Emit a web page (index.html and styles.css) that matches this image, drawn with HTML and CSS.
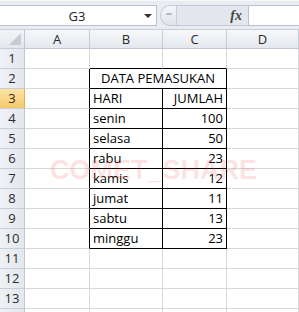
FILE: index.html
```html
<!DOCTYPE html>
<html lang="en">
<head>
    <meta charset="UTF-8">
    <title>DATA PEMASUKAN</title>
    <link rel="stylesheet" href="styles.css">
</head>
<body>
    <div class="formula-bar">
        <div class="name-box">
            <span class="name">G3</span>
            <span class="arrow"></span>
        </div>
        <div class="fx-area">
            <span class="grip"></span>
            <span class="fx">fx</span>
        </div>
        <div class="formula-input"></div>
    </div>

    <div class="sheet">
        <div class="row head-row">
            <div class="rh corner"><span class="tri"></span></div>
            <div class="ch col-a">A</div>
            <div class="ch col-b">B</div>
            <div class="ch col-c">C</div>
            <div class="ch col-d">D</div>
        </div>
        <div class="row">
            <div class="rh">1</div>
            <div class="cell col-a"></div>
            <div class="cell col-b bb"></div>
            <div class="cell col-c bb"></div>
            <div class="cell col-d"></div>
        </div>
        <div class="row">
            <div class="rh">2</div>
            <div class="cell col-a br"></div>
            <div class="cell merged br bb center">DATA PEMASUKAN</div>
            <div class="cell col-d"></div>
        </div>
        <div class="row">
            <div class="rh active">3</div>
            <div class="cell col-a br"></div>
            <div class="cell col-b br bb">HARI</div>
            <div class="cell col-c br bb right">JUMLAH</div>
            <div class="cell col-d"></div>
        </div>
        <div class="row">
            <div class="rh">4</div>
            <div class="cell col-a br"></div>
            <div class="cell col-b br bb">senin</div>
            <div class="cell col-c br bb right">100</div>
            <div class="cell col-d"></div>
        </div>
        <div class="row">
            <div class="rh">5</div>
            <div class="cell col-a br"></div>
            <div class="cell col-b br bb">selasa</div>
            <div class="cell col-c br bb right">50</div>
            <div class="cell col-d"></div>
        </div>
        <div class="row">
            <div class="rh">6</div>
            <div class="cell col-a br"></div>
            <div class="cell col-b br bb">rabu</div>
            <div class="cell col-c br bb right">23</div>
            <div class="cell col-d"></div>
        </div>
        <div class="row">
            <div class="rh">7</div>
            <div class="cell col-a br"></div>
            <div class="cell col-b br bb">kamis</div>
            <div class="cell col-c br bb right">12</div>
            <div class="cell col-d"></div>
        </div>
        <div class="row">
            <div class="rh">8</div>
            <div class="cell col-a br"></div>
            <div class="cell col-b br bb">jumat</div>
            <div class="cell col-c br bb right">11</div>
            <div class="cell col-d"></div>
        </div>
        <div class="row">
            <div class="rh">9</div>
            <div class="cell col-a br"></div>
            <div class="cell col-b br bb">sabtu</div>
            <div class="cell col-c br bb right">13</div>
            <div class="cell col-d"></div>
        </div>
        <div class="row">
            <div class="rh">10</div>
            <div class="cell col-a br"></div>
            <div class="cell col-b br bb">minggu</div>
            <div class="cell col-c br bb right">23</div>
            <div class="cell col-d"></div>
        </div>
        <div class="row">
            <div class="rh">11</div>
            <div class="cell col-a"></div>
            <div class="cell col-b"></div>
            <div class="cell col-c"></div>
            <div class="cell col-d"></div>
        </div>
        <div class="row">
            <div class="rh">12</div>
            <div class="cell col-a"></div>
            <div class="cell col-b"></div>
            <div class="cell col-c"></div>
            <div class="cell col-d"></div>
        </div>
        <div class="row">
            <div class="rh">13</div>
            <div class="cell col-a"></div>
            <div class="cell col-b"></div>
            <div class="cell col-c"></div>
            <div class="cell col-d"></div>
        </div>
        <div class="row">
            <div class="rh"></div>
            <div class="cell col-a"></div>
            <div class="cell col-b"></div>
            <div class="cell col-c"></div>
            <div class="cell col-d"></div>
        </div>

        <div class="watermark">COMET_SHARE</div>
    </div>
</body>
</html>
```

FILE: styles.css
```css
/* Excel 2010 style sheet view */
* {
    box-sizing: border-box;
}

body {
    margin: 0;
    padding: 0;
    width: 299px;
    height: 312px;
    overflow: hidden;
    font-family: "Open Sans", "Liberation Sans", sans-serif;
    font-size: 13px;
    color: #000;
    background-color: #fff;
}

/* Formula bar */
.formula-bar {
    display: flex;
    height: 30px;
    padding: 4px 0 4px 0;
    background-color: #e9ecf0;
    border-top: 1px solid #f6f7f9;
    border-bottom: 1px solid #c9ced6;
}

.name-box {
    display: flex;
    align-items: center;
    width: 157px;
    height: 21px;
    background-color: #fff;
    border: 1px solid #b9c1cc;
    border-left: none;
}

.name {
    flex: 1;
    text-align: center;
    padding-left: 10px;
    font-size: 13px;
    color: #222;
}

.arrow {
    width: 0;
    height: 0;
    margin-right: 4px;
    border-left: 4px solid transparent;
    border-right: 4px solid transparent;
    border-top: 4px solid #333;
}

.fx-area {
    display: flex;
    align-items: center;
    justify-content: space-between;
    width: 88px;
    height: 21px;
    margin-left: 3px;
    padding: 0 6px 0 0;
    background-color: #e4e8ee;
    border: 1px solid #c3c9d2;
    border-right: none;
    border-radius: 11px 0 0 11px;
}

.grip {
    width: 16px;
    height: 19px;
    border-radius: 10px 0 0 10px;
    background: linear-gradient(#f4f6f8, #dfe3e9);
    border-right: 1px solid #c8ced6;
    position: relative;
}

.grip::after {
    content: "";
    position: absolute;
    left: 5px;
    top: 7px;
    width: 6px;
    height: 2px;
    background-color: #b3bac4;
    border-radius: 1px;
}

.fx {
    font-family: "Liberation Serif", serif;
    font-style: italic;
    font-weight: bold;
    font-size: 14px;
    color: #444;
}

.formula-input {
    flex: 1;
    height: 21px;
    background-color: #fff;
    border: 1px solid #b9c1cc;
    border-right: none;
}

/* Grid */
.sheet {
    position: relative;
}

.row {
    display: flex;
    height: 20px;
}

.head-row {
    height: 19px;
}

.rh {
    width: 25px;
    flex-shrink: 0;
    text-align: center;
    line-height: 19px;
    color: #2b2b2b;
    background: linear-gradient(to right, #eef1f5, #e4e8ee);
    border-right: 1px solid #c2c8d1;
    border-bottom: 1px solid #c9ced6;
}

.rh.active {
    background: linear-gradient(#fbe3a9, #f6c86a);
    border-right-color: #e2b14f;
    color: #3a2a10;
}

.corner {
    position: relative;
    background: linear-gradient(#f2f4f7, #e3e7ec);
}

.tri {
    position: absolute;
    right: 3px;
    bottom: 3px;
    width: 0;
    height: 0;
    border-left: 12px solid transparent;
    border-bottom: 12px solid #c8ccd2;
}

.ch {
    flex-shrink: 0;
    text-align: center;
    line-height: 18px;
    color: #2b2b2b;
    background: linear-gradient(#f7f8fa, #e4e8ee);
    border-right: 1px solid #c6ccd4;
    border-bottom: 1px solid #c2c8d1;
}

.cell {
    flex-shrink: 0;
    padding: 0 3px;
    line-height: 19px;
    white-space: nowrap;
    border-right: 1px solid #d6d8da;
    border-bottom: 1px solid #d6d8da;
}

.col-a { width: 65px; }
.col-b { width: 73px; }
.col-c { width: 64px; }
.col-d { flex: 1; }
.merged { width: 137px; }

.br { border-right-color: #000; }
.bb { border-bottom-color: #000; }

.center { text-align: center; }
.right { text-align: right; }

.watermark {
    position: absolute;
    left: 50px;
    top: 125px;
    font-family: "Liberation Sans", sans-serif;
    font-weight: bold;
    font-size: 27px;
    color: rgba(240, 70, 70, 0.16);
    pointer-events: none;
}
```
